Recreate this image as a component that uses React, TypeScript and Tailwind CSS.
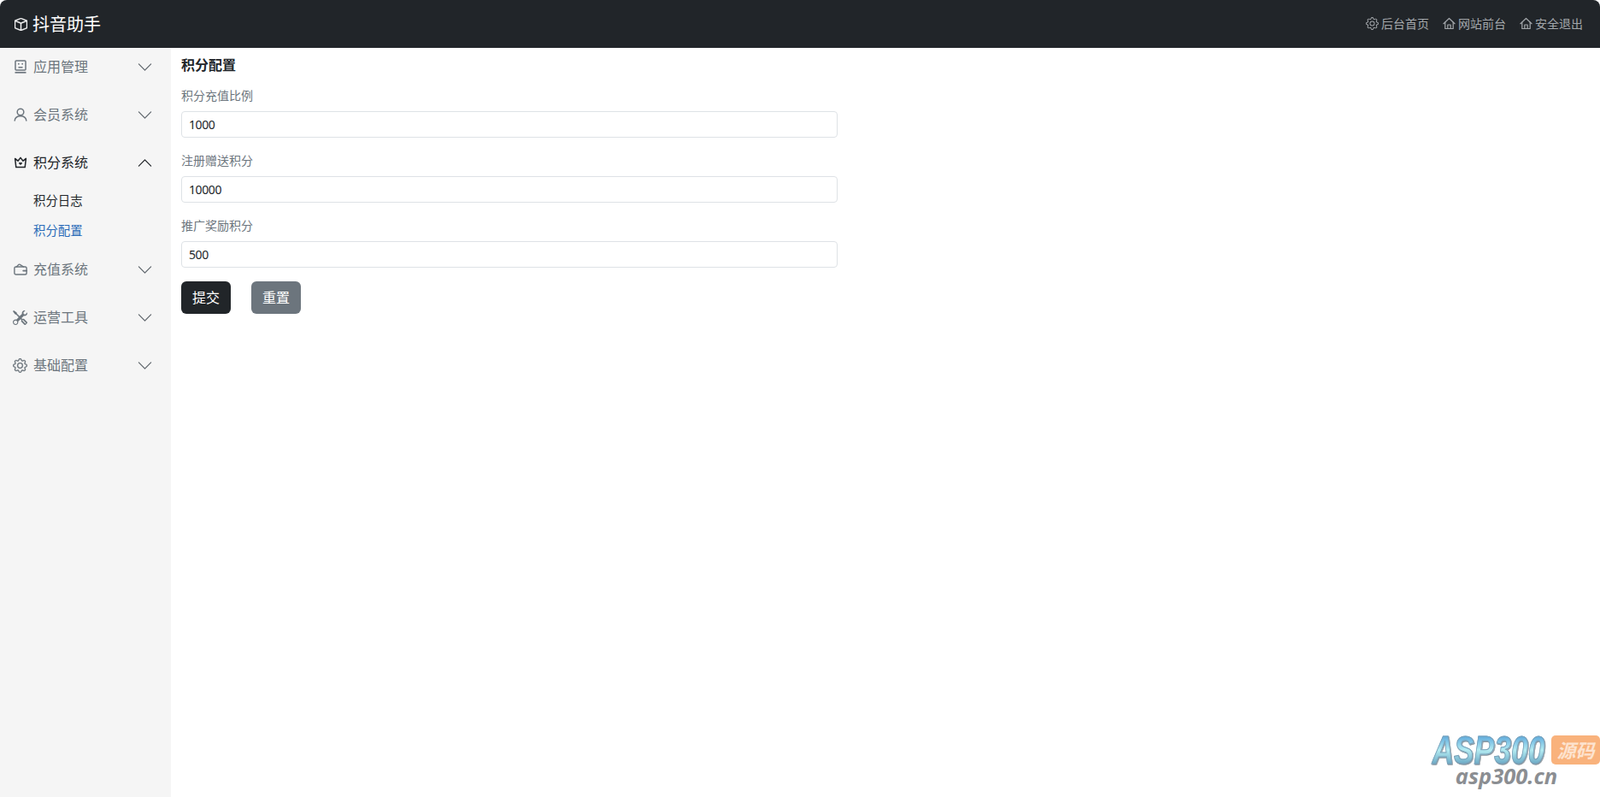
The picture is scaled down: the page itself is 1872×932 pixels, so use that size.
import { BsBox, BsChevronDown, BsChevronUp, BsGear, BsTools } from 'react-icons/bs';
import type { ReactNode } from 'react';

const FONT = "font-['Noto_Sans','Noto_Sans_CJK_SC',sans-serif]";

function RobotIcon() {
  return (
    <svg viewBox="0 0 16 16" className="w-[16px] h-[16px]" fill="none" stroke="currentColor" strokeWidth="1.5">
      <rect x="2" y="1" width="12" height="11" rx="1" />
      <path d="M1.5 14.8h13" strokeWidth="1.7" />
      <path d="M5 4.8h1.6M9.4 4.8H11M5.5 8.8h5" />
    </svg>
  );
}

function PersonIcon() {
  return (
    <svg viewBox="0 0 16 16" className="w-[16px] h-[16px]" fill="none" stroke="currentColor" strokeWidth="1.5" strokeLinecap="round">
      <circle cx="8" cy="5" r="3.8" />
      <path d="M1.2 15c.4-3.2 3-5.2 6.8-5.2s6.4 2 6.8 5.2" />
    </svg>
  );
}

function CrownIcon() {
  return (
    <svg viewBox="0 0 16 16" className="w-[16px] h-[16px]" fill="none" stroke="currentColor" strokeWidth="1.5" strokeLinejoin="round">
      <path d="M1.6 3.4 5 6.2 8 2.4l3 3.8 3.4-2.8-1.2 10.2H2.8z" />
      <path d="M6.3 8.4c.6-.9 1.4-.4 1.7.1.3-.5 1.1-1 1.7-.1.4.8-.9 1.8-1.7 2.3-.8-.5-2.1-1.5-1.7-2.3z" fill="currentColor" strokeWidth="0.4" />
    </svg>
  );
}

function WalletIcon() {
  return (
    <svg viewBox="0 0 16 16" className="w-[16px] h-[16px]" fill="none" stroke="currentColor" strokeWidth="1.4" strokeLinejoin="round" strokeLinecap="round">
      <rect x="0.9" y="5" width="14.2" height="9" rx="1.8" />
      <path d="M3.4 5 5.6 2.6c.5-.5 1.1-.6 1.7-.3L11.6 5" />
      <path d="M11.2 9.6h3.9" strokeWidth="1.8" />
    </svg>
  );
}

function HomeIcon() {
  return (
    <svg viewBox="0 0 16 16" className="w-[15px] h-[15px]" fill="none" stroke="currentColor" strokeWidth="1.3" strokeLinejoin="round" strokeLinecap="round">
      <path d="M1 8.2 8 1.6l7 6.6" />
      <path d="M3 6.6v7.8h10V6.6" />
      <path d="M6.2 14.4V9.6h3.6v4.8" />
    </svg>
  );
}

function SideItem({ icon, label, open }: { icon: ReactNode; label: string; open?: boolean }) {
  return (
    <div className={`h-[44px] mb-3 pl-[15px] pr-[21px] flex items-center ${open ? 'text-[#212529]' : 'text-[#6c757d]'}`}>
      <span className="w-[17px] flex justify-center shrink-0">{icon}</span>
      <span className="ml-[7px] text-[16px] flex-1">{label}</span>
      {open ? <BsChevronUp size={19} className="text-[#212529]" /> : <BsChevronDown size={19} className="text-[#5f666c]" />}
    </div>
  );
}

function TopLink({ icon, label }: { icon: ReactNode; label: string }) {
  return (
    <a className="flex items-center gap-[3px] text-[14px] text-[#a3a7ab]">
      {icon}
      <span>{label}</span>
    </a>
  );
}

function Field({ label, value }: { label: string; value: string }) {
  return (
    <div className="mb-[16px]">
      <label className="block text-[14px] leading-[21px] mb-[8px] text-[#6c757d]">{label}</label>
      <input
        readOnly
        value={value}
        className="block w-full h-[31px] px-[8px] text-[14px] tracking-[-0.4px] text-[#212529] bg-white border border-[#dee2e6] rounded-[4px] outline-none"
      />
    </div>
  );
}

export default function App() {
  return (
    <div className={`w-full h-[932px] relative overflow-hidden bg-white flex flex-col ${FONT}`}>
      {/* Header */}
      <header className="h-[56px] shrink-0 bg-[#212529] rounded-t-[8px] pl-[17px] pr-[20px] flex items-center justify-between">
        <div className="flex items-center gap-[6px] pt-[1px] text-white">
          <BsBox size={15} stroke="currentColor" strokeWidth={0.5} />
          <span className="text-[20px] leading-[30px]">抖音助手</span>
        </div>
        <nav className="flex items-center gap-[16px] pb-[1px]">
          <TopLink icon={<BsGear size={15} />} label="后台首页" />
          <TopLink icon={<HomeIcon />} label="网站前台" />
          <TopLink icon={<HomeIcon />} label="安全退出" />
        </nav>
      </header>

      <div className="flex-1 flex min-h-0">
        {/* Sidebar */}
        <aside className="w-[200px] shrink-0 bg-[#f5f5f5]">
          <SideItem icon={<RobotIcon />} label="应用管理" />
          <SideItem icon={<PersonIcon />} label="会员系统" />
          <SideItem icon={<CrownIcon />} label="积分系统" open />
          <div className="-mt-[7px] mb-[6px] pl-[39px] text-[14.4px]">
            <div className="h-[35px] flex items-center text-[#212529]">积分日志</div>
            <div className="h-[35px] flex items-center text-[#2a6bb8]">积分配置</div>
          </div>
          <SideItem icon={<WalletIcon />} label="充值系统" />
          <SideItem icon={<BsTools size={17} />} label="运营工具" />
          <SideItem icon={<BsGear size={17} stroke="currentColor" strokeWidth={0.3} />} label="基础配置" />
        </aside>

        {/* Main */}
        <main className="flex-1 pl-[12px] pt-[8px]">
          <h1 className="text-[16px] leading-[24px] font-bold text-[#212529] mb-[13px]">积分配置</h1>
          <form className="w-[768px]">
            <Field label="积分充值比例" value="1000" />
            <Field label="注册赠送积分" value="10000" />
            <Field label="推广奖励积分" value="500" />
            <div className="flex gap-[24px]">
              <button type="button" className="w-[58px] h-[38px] rounded-[6px] bg-[#212529] text-white text-[16px]">提交</button>
              <button type="button" className="w-[58px] h-[38px] rounded-[6px] bg-[#6c757d] text-white text-[16px]">重置</button>
            </div>
          </form>
        </main>
      </div>

      {/* Watermark */}
      <div className="absolute right-0 bottom-[11px] w-[195px] flex flex-col items-center">
        <div className="flex items-center gap-[8px] self-end">
          <span className="text-[46px] leading-[38px] font-bold italic origin-right scale-x-[0.77] font-['Liberation_Sans',sans-serif] text-transparent bg-clip-text bg-gradient-to-b from-[#4f9fd8] via-[#b4ecf2] to-[#5f9fbe] [-webkit-text-stroke:1px_#7ba0b8] drop-shadow-[1px_1px_0_#8a949c]">ASP300</span>
          <span className="w-[57px] h-[34px] rounded-[5px] bg-[#f9b27c] text-[#fde3cf] text-[22px] italic font-bold flex items-center justify-center">源码</span>
        </div>
        <span className="-mt-[3px] pr-[24px] text-[25.5px] leading-[28px] font-bold italic text-[#8b8e92] font-['Open_Sans',sans-serif]">asp300.cn</span>
      </div>
    </div>
  );
}
